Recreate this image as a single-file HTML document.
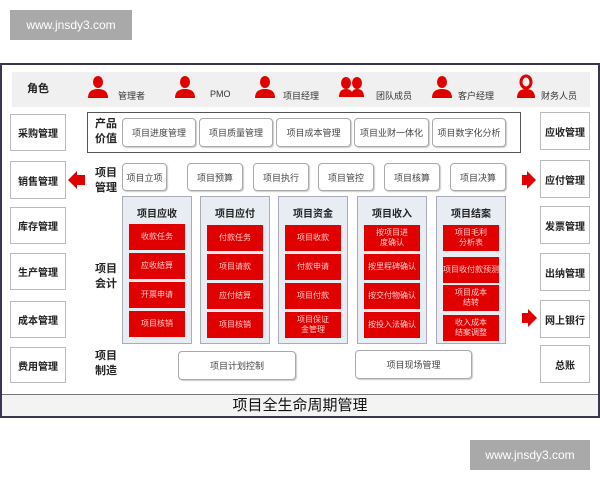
<!DOCTYPE html>
<html><head><meta charset="utf-8"><style>
*{margin:0;padding:0;box-sizing:border-box}
body{width:600px;height:480px;background:#fff;position:relative;overflow:hidden;font-family:"Liberation Sans","Noto Sans CJK SC",sans-serif;color:#222}
.a{position:absolute}
.wm{background:#a9a9a9;color:#fff;font-size:12px;display:flex;align-items:center;justify-content:center}
.frame{left:0;top:63px;width:600px;height:355px;border:2px solid #3a3550;background:#fff}
.box{position:absolute;border:1px solid #bbb;background:#fff;display:flex;align-items:center;justify-content:center;font-size:10px;font-weight:bold;color:#222}
.pill{position:absolute;border:1px solid #aaa;border-radius:4px;background:#fff;display:flex;align-items:center;justify-content:center;font-size:9px;color:#444;box-shadow:1px 1px 1px #ccc}
.col{position:absolute;top:196px;width:70px;height:148px;border:1px solid #aab;background:#e8edf4}
.col h4{font-size:10px;text-align:center;margin-top:8px;font-weight:bold}
.rb{position:absolute;left:6px;width:56px;height:26px;background:#e00000;color:#fcc;font-size:8px;display:flex;align-items:center;justify-content:center;text-align:center;line-height:10px}
.lbl{position:absolute;font-size:11px;font-weight:bold;line-height:15px}
.role{position:absolute;top:89px;font-size:9px;color:#333}
</style></head><body>
<div class="a wm" style="left:10px;top:10px;width:122px;height:30px">www.jnsdy3.com</div>
<div class="a wm" style="left:470px;top:440px;width:120px;height:30px">www.jnsdy3.com</div>
<div class="a frame"></div>
<div class="a" style="left:12px;top:72px;width:578px;height:35px;background:#f0f0f0"></div>
<div class="lbl" style="left:27px;top:82px">角色</div>
<svg class="a" style="left:0;top:0" width="600" height="120">
<g fill="#e00000">
<g transform="translate(88,76)"><ellipse cx="10" cy="6" rx="5" ry="6"/><path d="M0 22 Q0 13 10 13 Q20 13 20 22Z"/></g>
<g transform="translate(175,76)"><ellipse cx="10" cy="6" rx="5" ry="6"/><path d="M0 22 Q0 13 10 13 Q20 13 20 22Z"/></g>
<g transform="translate(255,76)"><ellipse cx="10" cy="6" rx="5" ry="6"/><path d="M0 22 Q0 13 10 13 Q20 13 20 22Z"/></g>
<g transform="translate(340,77)"><ellipse cx="6" cy="6" rx="5" ry="6"/><path d="M-1 20 Q-1 12 6 12 Q13 12 13 20Z"/><ellipse cx="17" cy="6" rx="5" ry="6"/><path d="M11 20 Q11 12 17 12 Q24 12 24 20Z"/></g>
<g transform="translate(432,76)"><ellipse cx="10" cy="6" rx="5" ry="6"/><path d="M0 22 Q0 13 10 13 Q20 13 20 22Z"/></g>
<g transform="translate(517,76)"><ellipse cx="9" cy="6" rx="5" ry="6" fill="none" stroke="#e00000" stroke-width="3"/><path d="M0 22 Q0 13 9 13 Q18 13 18 22Z"/></g>
</g></svg>
<div class="role" style="left:118px">管理者</div>
<div class="role" style="left:210px">PMO</div>
<div class="role" style="left:283px">项目经理</div>
<div class="role" style="left:376px">团队成员</div>
<div class="role" style="left:458px">客户经理</div>
<div class="role" style="left:541px">财务人员</div>

<div class="box" style="left:10px;top:114px;width:56px;height:37px">采购管理</div>
<div class="box" style="left:10px;top:161px;width:56px;height:38px">销售管理</div>
<div class="box" style="left:10px;top:207px;width:56px;height:37px">库存管理</div>
<div class="box" style="left:10px;top:253px;width:56px;height:37px">生产管理</div>
<div class="box" style="left:10px;top:301px;width:56px;height:37px">成本管理</div>
<div class="box" style="left:10px;top:347px;width:56px;height:36px">费用管理</div>
<div class="box" style="left:540px;top:112px;width:50px;height:38px">应收管理</div>
<div class="box" style="left:540px;top:160px;width:50px;height:38px">应付管理</div>
<div class="box" style="left:540px;top:206px;width:50px;height:38px">发票管理</div>
<div class="box" style="left:540px;top:253px;width:50px;height:38px">出纳管理</div>
<div class="box" style="left:540px;top:300px;width:50px;height:38px">网上银行</div>
<div class="box" style="left:540px;top:345px;width:50px;height:38px">总账</div>

<div class="a" style="left:87px;top:112px;width:434px;height:41px;border:1.5px solid #555"></div>
<div class="lbl" style="left:95px;top:117px">产品<br>价值</div>
<div class="pill" style="left:122px;top:118px;width:74px;height:29px">项目进度管理</div>
<div class="pill" style="left:199px;top:118px;width:74px;height:29px">项目质量管理</div>
<div class="pill" style="left:276px;top:118px;width:75px;height:29px">项目成本管理</div>
<div class="pill" style="left:354px;top:118px;width:75px;height:29px">项目业财一体化</div>
<div class="pill" style="left:432px;top:118px;width:74px;height:29px">项目数字化分析</div>

<div class="lbl" style="left:95px;top:166px">项目<br>管理</div>
<div class="pill" style="left:122px;top:163px;width:45px;height:28px">项目立项</div>
<div class="pill" style="left:187px;top:163px;width:56px;height:28px">项目预算</div>
<div class="pill" style="left:253px;top:163px;width:56px;height:28px">项目执行</div>
<div class="pill" style="left:318px;top:163px;width:56px;height:28px">项目管控</div>
<div class="pill" style="left:384px;top:163px;width:56px;height:28px">项目核算</div>
<div class="pill" style="left:450px;top:163px;width:56px;height:28px">项目决算</div>
<svg class="a" style="left:0;top:0" width="600" height="340"><g fill="#e00000">
<path d="M68 180 L77 171 L77 175 L85 175 L85 185 L77 185 L77 189Z"/>
<path d="M536 180 L527 171 L527 175 L522 175 L522 185 L527 185 L527 189Z"/>
<path d="M537 318 L528 309 L528 313 L522 313 L522 323 L528 323 L528 327Z"/>
</g></svg>

<div class="lbl" style="left:95px;top:262px">项目<br>会计</div>
<div class="col" style="left:122px"><h4>项目应收</h4>
<div class="rb" style="top:27px">收款任务</div><div class="rb" style="top:56px">应收结算</div><div class="rb" style="top:85px">开票申请</div><div class="rb" style="top:114px">项目核销</div></div>
<div class="col" style="left:200px"><h4>项目应付</h4>
<div class="rb" style="top:28px">付款任务</div><div class="rb" style="top:57px">项目请款</div><div class="rb" style="top:86px">应付结算</div><div class="rb" style="top:115px">项目核销</div></div>
<div class="col" style="left:278px"><h4>项目资金</h4>
<div class="rb" style="top:28px">项目收款</div><div class="rb" style="top:57px">付款申请</div><div class="rb" style="top:86px">项目付款</div><div class="rb" style="top:115px">项目保证<br>金管理</div></div>
<div class="col" style="left:357px"><h4>项目收入</h4>
<div class="rb" style="top:28px">按项目进<br>度确认</div><div class="rb" style="top:57px">按里程碑确认</div><div class="rb" style="top:86px">按交付物确认</div><div class="rb" style="top:115px">按投入法确认</div></div>
<div class="col" style="left:436px"><h4>项目结案</h4>
<div class="rb" style="top:28px">项目毛利<br>分析表</div><div class="rb" style="top:60px">项目收付款预测</div><div class="rb" style="top:88px">项目成本<br>结转</div><div class="rb" style="top:118px">收入成本<br>结案调整</div></div>

<div class="lbl" style="left:95px;top:349px">项目<br>制造</div>
<div class="pill" style="left:178px;top:351px;width:118px;height:29px">项目计划控制</div>
<div class="pill" style="left:355px;top:350px;width:117px;height:29px">项目现场管理</div>

<div class="a" style="left:2px;top:394px;width:596px;height:22px;border-top:1px solid #777;background:#f3f3f3;text-align:center;font-size:15px;line-height:22px;color:#111">项目全生命周期管理</div>
</body></html>
